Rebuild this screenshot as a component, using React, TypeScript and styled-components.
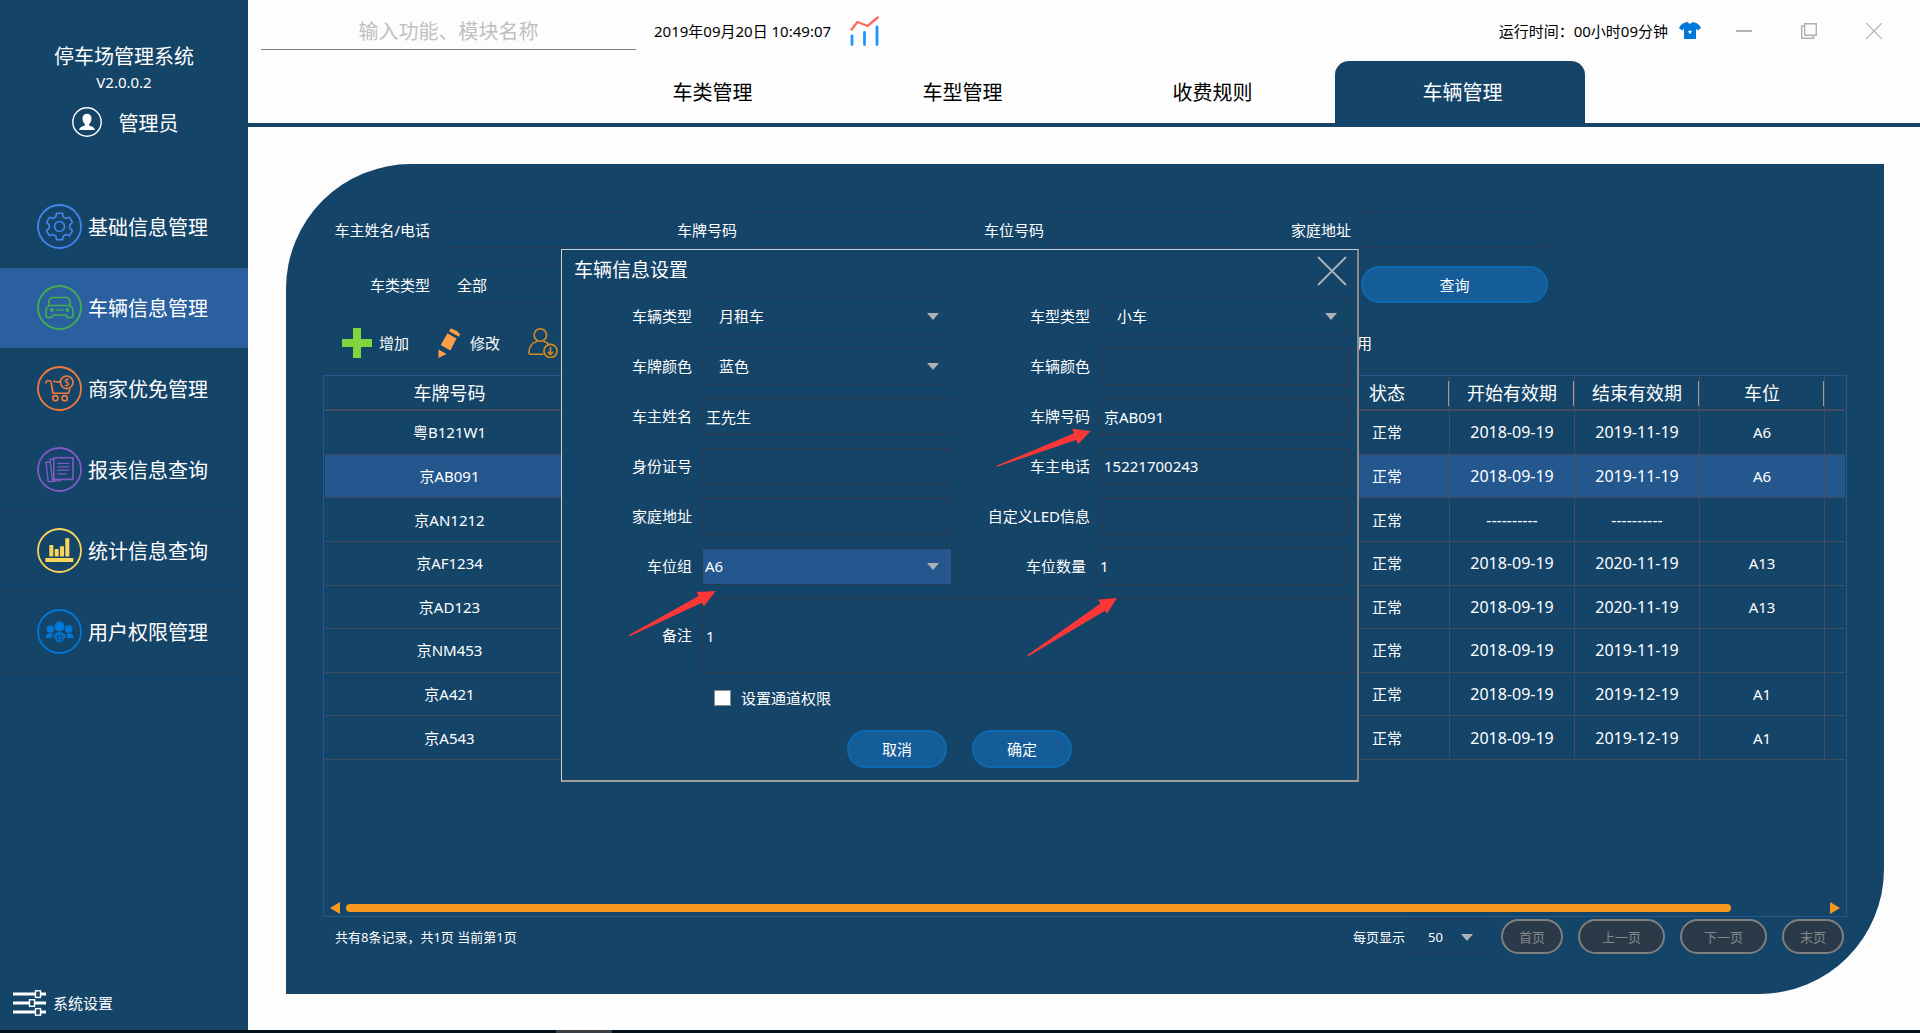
import React from "react";
import styled, { createGlobalStyle, css } from "styled-components";

const c = {
  navy: "#154469",
  navyLine: "#203c57",
  active: "#2a60a0",
  selected: "#24578e",
  frame: "#24578f",
  grid: "#474b5e",
  fieldLine: "#243a56",
  fieldDark: "#2f364c",
  button: "#145d98",
  buttonLine: "#0f69ae",
  orange: "#f7991f",
  grey: "#adb0b5",
};

const Global = createGlobalStyle`
  *, *::before, *::after { box-sizing: border-box; }
  body { margin: 0; background: #fdfdfd; }
  body, button, input, select, textarea {
    font-family: "Noto Sans", "Noto Sans CJK SC", sans-serif;
    font-size: 15px;
    line-height: 20px;
  }
  button { cursor: pointer; }
`;

const Page = styled.div`
  min-height: 100vh;
  display: flex;
  flex-direction: column;
`;

const Columns = styled.div`
  flex: 1;
  display: flex;
`;

const Taskbar = styled.div`
  height: 3px;
  padding-left: 556px;
  background: #04101a;
`;

const TaskbarItem = styled.div`
  width: 56px;
  height: 3px;
  background: #3a3f46;
`;

/* Sidebar */

const Sidebar = styled.aside`
  flex: none;
  width: 248px;
  display: flex;
  flex-direction: column;
  background: ${c.navy};
  color: #fff;
`;

const Brand = styled.div`
  height: 186px;
  padding-top: 42px;
  text-align: center;
`;

const BrandTitle = styled.h1`
  margin: 0;
  font-size: 20px;
  font-weight: 400;
  line-height: 30px;
`;

const Version = styled.div`
  line-height: 20px;
`;

const UserRow = styled.div`
  display: flex;
  align-items: center;
  justify-content: center;
  gap: 17px;
  height: 30px;
  margin-top: 15px;
  padding-left: 2px;
  font-size: 20px;
`;

const Menu = styled.nav`
  border-bottom: 1px solid ${c.navyLine};
`;

const MenuItem = styled.a<{ $active?: boolean }>`
  display: flex;
  align-items: center;
  gap: 6px;
  height: 81px;
  padding: 0 0 1px 37px;
  border-top: 1px solid ${c.navyLine};
  background: ${(p) => (p.$active ? c.active : "transparent")};
  color: #fff;
  font-size: 20px;
  text-decoration: none;
`;

const MenuText = styled.span`
  padding-top: 3px;
`;

const SettingsLink = styled.a`
  display: flex;
  align-items: center;
  gap: 7px;
  margin-top: auto;
  padding: 0 0 14px 13px;
  color: #fff;
  text-decoration: none;
`;

/* Top bar and tabs */

const Main = styled.main`
  flex: 1;
  min-width: 0;
  display: flex;
  flex-direction: column;
`;

const TopBar = styled.header`
  display: flex;
  align-items: center;
  gap: 18px;
  height: 61px;
  padding: 0 38px 0 13px;
  color: #000;
`;

const Search = styled.input`
  width: 375px;
  height: 39px;
  padding: 2px 0 0;
  border: 0;
  border-bottom: 1px solid #808080;
  background: transparent;
  font-size: 20px;
  text-align: center;
  outline: none;
  &::placeholder { color: #c0c0c0; opacity: 1; }
`;

const RunInfo = styled.div`
  display: flex;
  align-items: center;
  gap: 11px;
  margin-left: auto;
`;

const WindowButtons = styled.div`
  display: flex;
  gap: 49px;
  padding-left: 24px;
`;

const PlainButton = styled.button`
  display: flex;
  align-items: center;
  gap: 7px;
  padding: 0;
  border: 0;
  background: transparent;
  color: inherit;
`;

const Tabs = styled.nav`
  display: flex;
  justify-content: center;
  padding-left: 2px;
  border-bottom: 4px solid ${c.navy};
`;

const Tab = styled.a<{ $active?: boolean }>`
  width: 250px;
  padding: 2px 0 0 5px;
  border-radius: 14px 14px 0 0;
  background: ${(p) => (p.$active ? c.navy : "transparent")};
  color: ${(p) => (p.$active ? "#fff" : "#000")};
  font-size: 20px;
  line-height: 60px;
  text-align: center;
  text-decoration: none;
`;

/* Panel */

const Panel = styled.section`
  flex: 1;
  display: flex;
  flex-direction: column;
  margin: 37px 36px 36px 38px;
  padding: 47px 0 40px;
  border-radius: 125px 0 125px 0;
  background: ${c.navy};
  color: #fff;
`;

const Filters = styled.form`
  display: grid;
  grid-template-columns: repeat(4, 100px 187px);
  column-gap: 10px;
  row-gap: 18px;
  align-items: center;
  padding-left: 44px;
`;

const FieldLabel = styled.label`
  text-align: right;
  white-space: nowrap;
`;

const field = css`
  width: 100%;
  height: 37px;
  margin: 0;
  border: 1px solid ${c.fieldLine};
  border-radius: 0;
  background: transparent;
  color: #fff;
  outline: none;
`;

const TextField = styled.input<{ $dark?: boolean }>`
  ${field}
  padding: 0 3px;
  border-color: ${(p) => (p.$dark ? c.fieldDark : c.fieldLine)};
`;

const SelectBox = styled.div`
  position: relative;
  &::after {
    content: "";
    position: absolute;
    top: 15px;
    right: 13px;
    border: 6px solid transparent;
    border-top: 7px solid ${c.grey};
    border-bottom: 0;
    pointer-events: none;
  }
`;

const SelectField = styled.select<{ $filled?: boolean; $small?: boolean }>`
  ${field}
  appearance: none;
  height: ${(p) => (p.$small ? 35 : 37)}px;
  padding: 0 ${(p) => (p.$filled ? 2 : 16)}px;
  font-size: ${(p) => (p.$small ? 13 : 15)}px;
  background: ${(p) => (p.$filled ? c.selected : "transparent")};
  option { background: ${c.navy}; }
`;

const PrimaryButton = styled.button<{ $tall?: boolean }>`
  width: 100%;
  height: ${(p) => (p.$tall ? 38 : 37)}px;
  padding: 0;
  border: 2px solid ${c.buttonLine};
  border-radius: 19px;
  background: ${c.button};
  color: #fff;
`;

const QueryCell = styled.div`
  grid-column: 8;
`;

const Toolbar = styled.div`
  display: flex;
  align-items: center;
  height: 30px;
  margin: 25px 37px 17px;
  padding: 0 475px 0 19px;
`;

const Tools = styled.div`
  display: flex;
  gap: 28px;
`;

const LastTool = styled.div`
  margin-left: auto;
`;

const TableFrame = styled.div`
  flex: 1;
  display: flex;
  flex-direction: column;
  margin: 0 37px;
  padding: 0 1px;
  border: 1px solid ${c.frame};
`;

const Table = styled.table`
  width: 100%;
  height: 384px;
  table-layout: fixed;
  border-collapse: separate;
  border-spacing: 0;
  text-align: center;
`;

const Th = styled.th<{ $line?: boolean }>`
  height: 35px;
  padding: 0;
  border-bottom: 2px solid ${c.grid};
  font-size: 18px;
  font-weight: 400;
  ${(p) =>
    p.$line &&
    css`
      border-right: 1px solid ${c.grid};
      background: linear-gradient(#a09c9c, #a09c9c) right 5px / 1px 25px no-repeat;
    `}
`;

const Tr = styled.tr<{ $selected?: boolean }>`
  background: ${(p) => (p.$selected ? c.selected : "transparent")};
`;

const Td = styled.td<{ $line?: boolean; $date?: boolean }>`
  padding: 0;
  border-bottom: 1px solid ${c.grid};
  border-right: ${(p) => (p.$line ? `1px solid ${c.grid}` : "0")};
  font-size: ${(p) => (p.$date ? 16 : 15)}px;
`;

const ScrollRow = styled.div`
  display: flex;
  align-items: center;
  gap: 6px;
  margin-top: auto;
  padding: 0 5px 2px;
`;

const ScrollArrow = styled.button<{ $right?: boolean }>`
  flex: none;
  width: 10px;
  height: 12px;
  padding: 0;
  border: 0;
  background: ${c.orange};
  clip-path: ${(p) => (p.$right ? "polygon(0 0, 100% 50%, 0 100%)" : "polygon(100% 0, 100% 100%, 0 50%)")};
`;

const ScrollTrack = styled.div`
  flex: 1;
`;

const ScrollThumb = styled.div`
  width: 93.7%;
  height: 8px;
  border-radius: 4px;
  background: ${c.orange};
`;

const PagerRow = styled.div`
  display: flex;
  align-items: center;
  gap: 15px;
  margin: 2px 40px 0 49px;
  font-size: 13px;
`;

const PageSize = styled.div`
  display: grid;
  grid-template-columns: auto 75px;
  gap: 6px;
  align-items: center;
  margin-left: auto;
`;

const PagerButton = styled.button<{ $wide?: boolean }>`
  width: ${(p) => (p.$wide ? 87 : 62)}px;
  height: 35px;
  padding: 0;
  border: 2px solid #7f7f7f;
  border-radius: 18px;
  background: #2b3a48;
  color: #858789;
  font-size: 13px;
`;

/* Dialog */

const Overlay = styled.div`
  position: fixed;
  inset: 0;
  display: flex;
  align-items: center;
  justify-content: center;
  padding-bottom: 3px;
`;

const Dialog = styled.div`
  position: relative;
  width: 798px;
  padding-bottom: 12px;
  border: 1px solid #d0d0d0;
  border-right: 2px solid #8f8a88;
  border-bottom: 2px solid #a09c9a;
  background: ${c.navy};
  color: #fff;
`;

const DialogHead = styled.div`
  display: flex;
  align-items: flex-start;
  justify-content: space-between;
  height: 48px;
  padding: 6px 10px 0 12px;
`;

const DialogTitle = styled.h2`
  margin: 0;
  font-size: 19px;
  font-weight: 400;
  line-height: 28px;
`;

const FormRow = styled.div<{ $inset?: boolean }>`
  display: grid;
  grid-template-columns: 130px 250px 1fr 250px;
  column-gap: 10px;
  align-items: center;
  margin-bottom: 13px;
  padding-right: ${(p) => (p.$inset ? 11 : 7)}px;
`;

const NoteRow = styled.div`
  display: grid;
  grid-template-columns: 130px 1fr;
  column-gap: 10px;
  align-items: center;
  padding-right: 6px;
`;

const Note = styled.textarea`
  ${field}
  display: block;
  height: 75px;
  padding: 27px 3px;
  border-color: ${c.fieldDark};
  resize: none;
`;

const CheckRow = styled.label`
  display: flex;
  align-items: center;
  gap: 10px;
  margin: 15px 0 22px 152px;
`;

const CheckBox = styled.input`
  appearance: none;
  width: 17px;
  height: 16px;
  margin: 0;
  border: 1px solid #8a8a8a;
  background: #fff;
`;

const DialogButtons = styled.div`
  display: grid;
  grid-template-columns: 100px 100px;
  justify-content: center;
  gap: 25px;
`;

const Marks = styled.svg`
  position: absolute;
  top: -1px;
  left: -1px;
  pointer-events: none;
`;

/* Icons */

const gearPath = (() => {
  const pts: string[] = [];
  for (let k = 0; k < 6; k++) {
    const mid = (-90 + k * 60) * (Math.PI / 180);
    [
      [10.4, -0.36],
      [13.6, -0.22],
      [13.6, 0.22],
      [10.4, 0.36],
    ].forEach(([r, d]) => {
      pts.push(`${(22.5 + r * Math.cos(mid + d)).toFixed(2)} ${(22.5 + r * Math.sin(mid + d)).toFixed(2)}`);
    });
  }
  return `M${pts.join("L")}Z`;
})();

const Ring = ({ color, children }: { color: string; children: React.ReactNode }) => (
  <svg width="45" height="45" viewBox="0 0 45 45" fill="none" stroke={color} strokeWidth="1.6" aria-hidden="true">
    <circle cx="22.5" cy="22.5" r="21.5" strokeWidth="1.8" />
    {children}
  </svg>
);

const GearIcon = () => (
  <Ring color="#4484ec">
    <path d={gearPath} strokeLinejoin="round" />
    <circle cx="22.5" cy="22.5" r="5" />
  </Ring>
);

const CarIcon = () => (
  <Ring color="#45ae4c">
    <path d="M12 20.5V16.5Q12 12.5 16 12.5H29Q33 12.5 33 16.5V20.5" />
    <path d="M13 20.5H32Q36 21.5 36 26V30.5Q36 32.5 34 32.5H31.5Q29.5 32.5 29 30H16Q15.5 32.5 13.5 32.5H11Q9 32.5 9 30.5V26Q9 21.5 13 20.5Z" />
    <circle cx="14.8" cy="25" r="1.2" />
    <circle cx="30.3" cy="25" r="1.2" />
    <path d="M18.5 25H26.5" strokeWidth="1.2" />
  </Ring>
);

const CartIcon = () => (
  <Ring color="#f47a3c">
    <path d="M9 17.5Q8.5 14.8 11 14.8H12.5Q13.8 14.8 14.2 17L16 27.2H31.5L33 22.5M16 15.3L23.5 16.3M16.5 27.2L31 27.2" />
    <circle cx="29.7" cy="16.3" r="6.3" />
    <circle cx="18.4" cy="32.2" r="2.6" />
    <circle cx="27.7" cy="32.2" r="2.6" />
    <text x="29.7" y="20" fontSize="10" textAnchor="middle" fill="#f47a3c" stroke="none">$</text>
  </Ring>
);

const ReportIcon = () => (
  <Ring color="#8259c4">
    <path d="M16.8 10.8H36V32.4H16.8Z" />
    <path d="M16.5 12.2H13L15.5 34L18.5 33.6M13.2 15.3H9L11.3 34.8L24 33.6" strokeWidth="1.4" />
    <path d="M20.3 16.3H32.3M20.3 19.8H32.3M20.3 23.2H32.3M20.3 26.8H29" strokeWidth="1.3" />
  </Ring>
);

const StatsIcon = () => (
  <Ring color="#fbd45c">
    <path d="M12.3 17H16.3V28.4H12.3ZM17.7 21H21.7V28.4H17.7ZM23 18.3H27V28.4H23ZM28.3 10.3H32.3V28.4H28.3ZM8.3 30H36.3V34H8.3Z" fill="#fbd45c" stroke="none" />
  </Ring>
);

const GroupIcon = () => (
  <Ring color="#0078d7">
    <g fill="#0078d7" stroke="none">
      <circle cx="22.5" cy="17.5" r="5" />
      <circle cx="13.3" cy="20" r="3.8" />
      <circle cx="31.7" cy="20" r="3.8" />
      <path d="M8.5 29Q8.5 25 12 24.4H16Q14.6 26.5 14.8 29ZM36.5 29Q36.5 25 33 24.4H29Q30.4 26.5 30.2 29Z" />
      <path d="M16.3 29Q16.5 23 22.5 23T28.7 29H27.3Q26.8 24.6 22.5 24.6T17.7 29Z" />
    </g>
    <circle cx="22.5" cy="28.8" r="3.6" />
    <path d="M20.4 28.8H24.6M22.5 26.7V30.9" strokeWidth="1.2" />
  </Ring>
);

const PersonIcon = () => (
  <svg width="30" height="30" viewBox="0 0 30 30" aria-hidden="true">
    <circle cx="15" cy="15" r="14.2" fill="none" stroke="#fff" strokeWidth="1.4" />
    <path d="M15 6.8C18 6.8 19.7 8.8 19.5 11.8C19.4 14.4 18.3 16 17.2 17V18.8C20 19.4 22.4 20.2 23 23H7C7.6 20.2 10 19.4 12.8 18.8V17C11.7 16 10.6 14.4 10.5 11.8C10.3 8.8 12 6.8 15 6.8Z" fill="#fff" />
  </svg>
);

const SlidersIcon = () => (
  <svg width="33" height="26" viewBox="0 0 33 26" aria-hidden="true">
    <path d="M0 4H33M0 13H33M0 22H33" stroke="#fff" strokeWidth="3" />
    <g fill={c.navy} stroke="#fff" strokeWidth="1.4">
      <rect x="22.5" y="0.8" width="5" height="6.6" />
      <rect x="16.5" y="9.7" width="5" height="6.6" />
      <rect x="22.5" y="18.6" width="5" height="6.6" />
    </g>
  </svg>
);

const ChartIcon = () => (
  <svg width="30" height="30" viewBox="0 0 30 30" fill="none" strokeLinecap="round" aria-hidden="true">
    <path d="M2.5 13.5L8.5 6L18.5 10L28.7 1.5" stroke="#fb6c62" strokeWidth="2.4" strokeLinejoin="round" />
    <path d="M3 20V28.5M15.5 16.5V28.5M28 11V28.5" stroke="#1d97fb" strokeWidth="2.8" />
  </svg>
);

const ShirtIcon = () => (
  <svg width="22" height="17" viewBox="0 0 22 17" aria-hidden="true">
    <path d="M6.2 0.5L8.5 0Q11 3.6 13.5 0L15.8 0.5Q20 1.6 22 6L18.6 8.4L17 6.4V17H5V6.4L3.4 8.4L0 6Q2 1.6 6.2 0.5Z" fill="#0078d7" />
    <path d="M11 7.4L11.6 9L13.2 9.2L12 10.3L12.3 11.9L11 11.1L9.7 11.9L10 10.3L8.8 9.2L10.4 9Z" fill="#fff" />
  </svg>
);

const WindowIcon = ({ d, width = 1.4 }: { d: string; width?: number }) => (
  <svg width="16" height="16" viewBox="0 0 16 16" fill="none" stroke={c.grey} strokeWidth={width} aria-hidden="true">
    <path d={d} />
  </svg>
);

const PlusIcon = () => (
  <svg width="30" height="30" viewBox="0 0 30 30" aria-hidden="true">
    <path d="M11 0H19V11H30V19H19V30H11V19H0V11H11Z" fill="#80d63c" />
  </svg>
);

const PencilIcon = () => (
  <svg width="26" height="30" viewBox="0 0 26 30" fill="#ff9f45" aria-hidden="true">
    <path d="M14 0.3Q19 2 23 6L22 8.8L12 3.3ZM10.5 5.3L19.5 10.5L13.3 22.5L3.8 17ZM1.5 21.5L9.5 26L1.5 30Z" />
  </svg>
);

const UserDownIcon = () => (
  <svg width="30" height="30" viewBox="0 0 30 30" fill="none" stroke="#d78b1f" strokeWidth="1.6" aria-hidden="true">
    <circle cx="12.3" cy="7" r="6.2" />
    <path d="M15.5 26.3H2.5Q0.9 26.3 0.9 24.8C1 18.5 4.5 14.2 9.5 13.2M15.5 13.2Q18.8 13.9 20.8 16.2" />
    <circle cx="22.5" cy="23" r="6.6" />
    <path d="M22.5 19V26.5M19.7 23.8L22.5 26.6L25.3 23.8" />
  </svg>
);

const CloseIcon = () => (
  <svg width="30" height="30" viewBox="0 0 30 30" stroke="#a9b1b8" strokeWidth="1.8" aria-hidden="true">
    <path d="M1 1L29 29M29 1L1 29" />
  </svg>
);

/* Data */

const menu = [
  { label: "基础信息管理", Icon: GearIcon },
  { label: "车辆信息管理", Icon: CarIcon, active: true },
  { label: "商家优免管理", Icon: CartIcon },
  { label: "报表信息查询", Icon: ReportIcon },
  { label: "统计信息查询", Icon: StatsIcon },
  { label: "用户权限管理", Icon: GroupIcon },
];

const tabs = ["车类管理", "车型管理", "收费规则", "车辆管理"];

const rows = [
  ["粤B121W1", "2018-09-19", "2019-11-19", "A6"],
  ["京AB091", "2018-09-19", "2019-11-19", "A6"],
  ["京AN1212", "----------", "----------", ""],
  ["京AF1234", "2018-09-19", "2020-11-19", "A13"],
  ["京AD123", "2018-09-19", "2020-11-19", "A13"],
  ["京NM453", "2018-09-19", "2019-11-19", ""],
  ["京A421", "2018-09-19", "2019-12-19", "A1"],
  ["京A543", "2018-09-19", "2019-12-19", "A1"],
];

type Item = { id: string; label: string; value?: string; select?: boolean; filled?: boolean };

const formRows: [Item, Item][] = [
  [
    { id: "kind", label: "车辆类型", value: "月租车", select: true },
    { id: "model", label: "车型类型", value: "小车", select: true },
  ],
  [
    { id: "plateColor", label: "车牌颜色", value: "蓝色", select: true },
    { id: "carColor", label: "车辆颜色" },
  ],
  [
    { id: "owner", label: "车主姓名", value: "王先生" },
    { id: "plate", label: "车牌号码", value: "京AB091" },
  ],
  [
    { id: "idCard", label: "身份证号" },
    { id: "phone", label: "车主电话", value: "15221700243" },
  ],
  [
    { id: "address", label: "家庭地址" },
    { id: "led", label: "自定义LED信息" },
  ],
  [
    { id: "group", label: "车位组", value: "A6", select: true, filled: true },
    { id: "count", label: "车位数量", value: "1" },
  ],
];

const FormItem = ({ id, label, value = "", select, filled }: Item) => (
  <>
    <FieldLabel htmlFor={id}>{label}</FieldLabel>
    {select ? (
      <SelectBox>
        <SelectField id={id} $filled={filled}>
          <option>{value}</option>
        </SelectField>
      </SelectBox>
    ) : (
      <TextField id={id} $dark defaultValue={value} />
    )}
  </>
);

const VehicleDialog = () => (
  <Overlay>
    <Dialog role="dialog" aria-labelledby="dialogTitle">
      <DialogHead>
        <DialogTitle id="dialogTitle">车辆信息设置</DialogTitle>
        <PlainButton type="button" aria-label="关闭">
          <CloseIcon />
        </PlainButton>
      </DialogHead>
      {formRows.map(([left, right], i) => (
        <FormRow key={left.id} $inset={i === formRows.length - 1}>
          <FormItem {...left} />
          <FormItem {...right} />
        </FormRow>
      ))}
      <NoteRow>
        <FieldLabel htmlFor="note">备注</FieldLabel>
        <Note id="note" defaultValue="1" />
      </NoteRow>
      <CheckRow>
        <CheckBox type="checkbox" />
        设置通道权限
      </CheckRow>
      <DialogButtons>
        <PrimaryButton type="button" $tall>取消</PrimaryButton>
        <PrimaryButton type="button" $tall>确定</PrimaryButton>
      </DialogButtons>
      <Marks width="798" height="532" viewBox="561 249 798 532" fill="#fb3737" aria-hidden="true">
        <path d="M1090.6 431L1072 428.8L1074 433.3L996.5 465.7L996.5 467L1076 440L1078.4 444Z" />
        <path d="M715.6 591L696.7 592L698.6 596L629 635L629.3 636.5L701.8 602.8L704 606.2Z" />
        <path d="M1117 598L1098 599.8L1100.4 603.6L1027.5 655L1028 656.5L1105 610.8L1107 613.5Z" />
      </Marks>
    </Dialog>
  </Overlay>
);

export default function App() {
  return (
    <>
      <Global />
      <Page>
        <Columns>
          <Sidebar>
            <Brand>
              <BrandTitle>停车场管理系统</BrandTitle>
              <Version>V2.0.0.2</Version>
              <UserRow>
                <PersonIcon />
                <MenuText>管理员</MenuText>
              </UserRow>
            </Brand>
            <Menu>
              {menu.map(({ label, Icon, active }) => (
                <MenuItem key={label} href="#" $active={active}>
                  <Icon />
                  <MenuText>{label}</MenuText>
                </MenuItem>
              ))}
            </Menu>
            <SettingsLink href="#">
              <SlidersIcon />
              系统设置
            </SettingsLink>
          </Sidebar>

          <Main>
            <TopBar>
              <Search placeholder="输入功能、模块名称" aria-label="输入功能、模块名称" />
              <span>2019年09月20日 10:49:07</span>
              <ChartIcon />
              <RunInfo>
                <span>运行时间：00小时09分钟</span>
                <ShirtIcon />
                <WindowButtons>
                  <PlainButton aria-label="最小化">
                    <WindowIcon d="M0 8H16" width={2} />
                  </PlainButton>
                  <PlainButton aria-label="还原">
                    <WindowIcon d="M3.7 0.7H15.3V12.3H3.7ZM3.7 3H0.7V15.3H12.5V12.3" />
                  </PlainButton>
                  <PlainButton aria-label="关闭窗口">
                    <WindowIcon d="M0 0L16 16M16 0L0 16" width={1.2} />
                  </PlainButton>
                </WindowButtons>
              </RunInfo>
            </TopBar>
            <Tabs>
              {tabs.map((t, i) => (
                <Tab key={t} href="#" $active={i === 3}>
                  {t}
                </Tab>
              ))}
            </Tabs>

            <Panel>
              <Filters onSubmit={(e) => e.preventDefault()}>
                <FieldLabel htmlFor="qOwner">车主姓名/电话</FieldLabel>
                <TextField id="qOwner" />
                <FieldLabel htmlFor="qPlate">车牌号码</FieldLabel>
                <TextField id="qPlate" />
                <FieldLabel htmlFor="qSpace">车位号码</FieldLabel>
                <TextField id="qSpace" />
                <FieldLabel htmlFor="qAddress">家庭地址</FieldLabel>
                <TextField id="qAddress" />
                <FieldLabel htmlFor="qKind">车类类型</FieldLabel>
                <SelectBox>
                  <SelectField id="qKind">
                    <option>全部</option>
                  </SelectField>
                </SelectBox>
                <QueryCell>
                  <PrimaryButton>查询</PrimaryButton>
                </QueryCell>
              </Filters>

              <Toolbar>
                <Tools>
                  <PlainButton type="button">
                    <PlusIcon />
                    增加
                  </PlainButton>
                  <PlainButton type="button">
                    <PencilIcon />
                    修改
                  </PlainButton>
                  <PlainButton type="button" aria-label="导入">
                    <UserDownIcon />
                  </PlainButton>
                </Tools>
                <LastTool>
                  <PlainButton type="button">用</PlainButton>
                </LastTool>
              </Toolbar>

              <TableFrame>
                <Table>
                  <colgroup>
                    <col style={{ width: 250 }} />
                    <col />
                    <col style={{ width: 125 }} />
                    <col style={{ width: 125 }} />
                    <col style={{ width: 125 }} />
                    <col style={{ width: 125 }} />
                    <col style={{ width: 20 }} />
                  </colgroup>
                  <thead>
                    <tr>
                      <Th $line>车牌号码</Th>
                      <Th $line />
                      <Th $line>状态</Th>
                      <Th $line>开始有效期</Th>
                      <Th $line>结束有效期</Th>
                      <Th $line>车位</Th>
                      <Th />
                    </tr>
                  </thead>
                  <tbody>
                    {rows.map(([plate, from, to, space], i) => (
                      <Tr key={plate} $selected={i === 1}>
                        <Td $line>{plate}</Td>
                        <Td $line />
                        <Td $line>正常</Td>
                        <Td $line $date>{from}</Td>
                        <Td $line $date>{to}</Td>
                        <Td $line>{space}</Td>
                        <Td />
                      </Tr>
                    ))}
                  </tbody>
                </Table>
                <ScrollRow>
                  <ScrollArrow aria-label="向左滚动" />
                  <ScrollTrack>
                    <ScrollThumb />
                  </ScrollTrack>
                  <ScrollArrow $right aria-label="向右滚动" />
                </ScrollRow>
              </TableFrame>

              <PagerRow>
                <span>共有8条记录，共1页 当前第1页</span>
                <PageSize>
                  <FieldLabel htmlFor="pageSize">每页显示</FieldLabel>
                  <SelectBox>
                    <SelectField id="pageSize" $small>
                      <option>50</option>
                    </SelectField>
                  </SelectBox>
                </PageSize>
                <PagerButton>首页</PagerButton>
                <PagerButton $wide>上一页</PagerButton>
                <PagerButton $wide>下一页</PagerButton>
                <PagerButton>末页</PagerButton>
              </PagerRow>
            </Panel>
          </Main>
        </Columns>
        <Taskbar>
          <TaskbarItem />
        </Taskbar>
      </Page>
      <VehicleDialog />
    </>
  );
}
